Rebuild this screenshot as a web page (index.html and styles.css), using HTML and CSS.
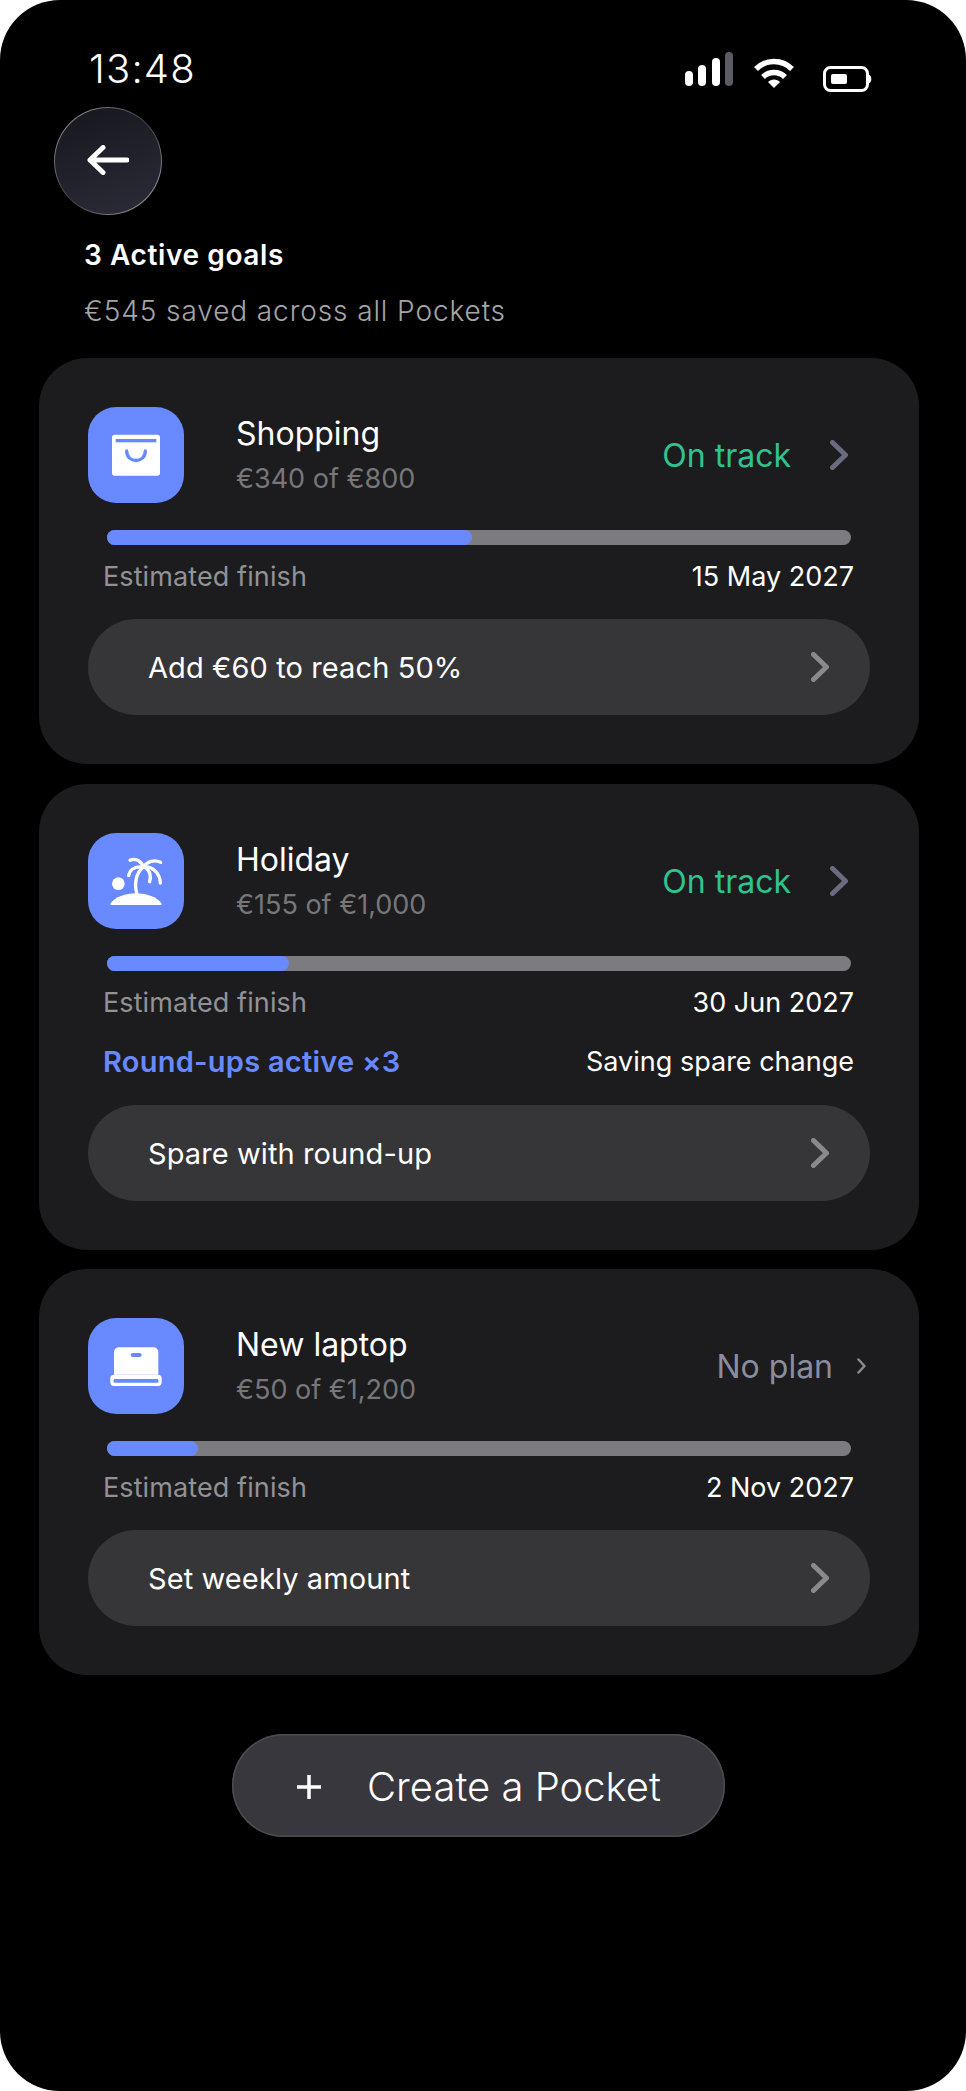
FILE: index.html
```html
<!DOCTYPE html>
<html>
<head>
    <title>Pockets - Active goals</title>
    <link rel="stylesheet" href="styles.css">
</head>
<body>
    <svg class="sprite" width="0" height="0">
        <symbol id="chevron" viewBox="0 0 18 30">
            <path d="M2.5 2.5 L15.5 15 L2.5 27.5" fill="none" stroke="currentColor" stroke-width="5" stroke-linecap="round" stroke-linejoin="round"/>
        </symbol>
    </svg>

    <div class="screen">
        <div class="status-bar">
            <span class="clock">13:48</span>
            <svg class="status-icons" width="187" height="40" viewBox="0 0 187 40">
                <rect x="0" y="19" width="8" height="15" rx="4" fill="#fff"/>
                <rect x="13" y="13" width="8" height="21" rx="4" fill="#fff"/>
                <rect x="27" y="6" width="8" height="28" rx="4" fill="#fff"/>
                <rect x="40" y="0" width="8" height="34" rx="4" fill="#5b5b64"/>
                <path d="M71 17 C81 7 97 7 107 17" fill="none" stroke="#fff" stroke-width="5.5" stroke-linejoin="round"/>
                <path d="M78 25 C84 19 94 19 100 25" fill="none" stroke="#fff" stroke-width="5.5"/>
                <path d="M83 30 C86 26.5 92 26.5 95 30 L89 36 Z" fill="#fff"/>
                <rect x="139.500" y="15.500" width="43" height="23" rx="6" fill="none" stroke="#fff" stroke-width="3"/>
                <rect x="146" y="22" width="16" height="10" rx="2" fill="#fff"/>
                <path d="M184 23 C187 23 187 31 184 31 Z" fill="#fff"/>
            </svg>
        </div>

        <button class="back-button">
            <svg width="42" height="30" viewBox="0 0 42 30">
                <path d="M40 15 H3 M16 2.500 L3 15 L16 27.500" fill="none" stroke="#fff" stroke-width="5" stroke-linecap="round" stroke-linejoin="round"/>
            </svg>
        </button>

        <div class="summary">
            <h1>3 Active goals</h1>
            <p>€545 saved across all Pockets</p>
        </div>

        <div class="card">
            <div class="card-head">
                <div class="card-icon">
                    <svg width="96" height="96" viewBox="0 0 288 288">
                        <rect x="72" y="83" width="144" height="123" rx="8" fill="#fff"/>
                        <rect x="83" y="96" width="122" height="10" fill="#6889ff"/>
                        <path d="M116 132 C116 170 172 170 172 132" fill="none" stroke="#6889ff" stroke-width="10" stroke-linecap="round"/>
                    </svg>
                </div>
                <div class="card-title">
                    <h2>Shopping</h2>
                    <span>€340 of €800</span>
                </div>
                <span class="state state-ok">On track</span>
                <svg class="chevron chevron-head"><use href="#chevron"/></svg>
            </div>
            <div class="progress"><div class="progress-fill" style="width: 49%"></div></div>
            <div class="info-row">
                <span class="info-label">Estimated finish</span>
                <span>15 May 2027</span>
            </div>
            <button class="action">
                <span>Add €60 to reach 50%</span>
                <svg class="chevron"><use href="#chevron"/></svg>
            </button>
        </div>

        <div class="card">
            <div class="card-head">
                <div class="card-icon">
                    <svg width="96" height="96" viewBox="0 0 288 288">
                        <path d="M67 212 C95 170 193 170 221 212 C222 215 220 216 217 216 H71 C68 216 66 215 67 212 Z" fill="#fff"/>
                        <circle cx="91" cy="152" r="19" fill="#fff"/>
                        <g fill="none" stroke="#fff" stroke-width="10" stroke-linecap="round">
                            <path d="M146 180 C138 150 145 120 165 102"/>
                            <path d="M122 128 C126 108 142 100 162 102"/>
                            <path d="M126 82 C142 74 160 84 167 102"/>
                            <path d="M167 102 C176 86 200 78 218 88"/>
                            <path d="M167 102 C190 98 216 118 217 150"/>
                            <path d="M172 104 C186 112 190 130 185 146"/>
                        </g>
                    </svg>
                </div>
                <div class="card-title">
                    <h2>Holiday</h2>
                    <span>€155 of €1,000</span>
                </div>
                <span class="state state-ok">On track</span>
                <svg class="chevron chevron-head"><use href="#chevron"/></svg>
            </div>
            <div class="progress"><div class="progress-fill" style="width: 24.500%"></div></div>
            <div class="info-row">
                <span class="info-label">Estimated finish</span>
                <span>30 Jun 2027</span>
            </div>
            <div class="info-row info-row-extra">
                <span class="roundups">Round-ups active ×3</span>
                <span>Saving spare change</span>
            </div>
            <button class="action action-extra">
                <span>Spare with round-up</span>
                <svg class="chevron"><use href="#chevron"/></svg>
            </button>
        </div>

        <div class="card card-last">
            <div class="card-head">
                <div class="card-icon">
                    <svg width="96" height="96" viewBox="0 0 288 288">
                        <path d="M78 170 V103 C78 94 85 88 93 88 H196 C204 88 211 94 211 103 V170 Z" fill="#fff"/>
                        <rect x="128" y="105" width="33" height="12" rx="6" fill="#6889ff"/>
                        <rect x="67" y="170" width="154" height="34" rx="11" fill="#fff"/>
                        <rect x="77" y="183" width="134" height="11" rx="3" fill="#6889ff"/>
                    </svg>
                </div>
                <div class="card-title">
                    <h2>New laptop</h2>
                    <span>€50 of €1,200</span>
                </div>
                <span class="state state-none">No plan</span>
                <svg class="chevron-small" width="9" height="16" viewBox="0 0 9 16">
                    <path d="M1.500 1.500 L7.500 8 L1.500 14.500" fill="none" stroke="#8a8a8f" stroke-width="2.500" stroke-linecap="round" stroke-linejoin="round"/>
                </svg>
            </div>
            <div class="progress"><div class="progress-fill" style="width: 12.200%"></div></div>
            <div class="info-row">
                <span class="info-label">Estimated finish</span>
                <span>2 Nov 2027</span>
            </div>
            <button class="action">
                <span>Set weekly amount</span>
                <svg class="chevron"><use href="#chevron"/></svg>
            </button>
        </div>

        <div class="create-wrap">
            <button class="create-button">
                <svg width="26" height="26" viewBox="0 0 26 26">
                    <path d="M13 1 V25 M1 13 H25" stroke="#fff" stroke-width="3.500"/>
                </svg>
                <span>Create a Pocket</span>
            </button>
        </div>
    </div>
</body>
</html>
```

FILE: styles.css
```css
body {
    margin: 0;
    background-color: #fff;
    font-family: Inter, "Liberation Sans", sans-serif;
    color: #fff;
}

h1, h2, p {
    margin: 0;
}

button {
    font-family: inherit;
    color: inherit;
    border: none;
    cursor: pointer;
}

.sprite {
    position: absolute;
}

.screen {
    height: 2091px;
    box-sizing: border-box;
    padding: 52px 47px 0 39px;
    background-color: #000;
    border-radius: 60px;
    overflow: hidden;
}

.status-bar {
    display: flex;
    justify-content: space-between;
    align-items: flex-start;
    height: 55px;
    padding: 0 47px 0 50px;
}

.clock {
    font-size: 40px;
    font-weight: 300;
    line-height: 34px;
    letter-spacing: 1.2px;
}

.back-button {
    display: flex;
    align-items: center;
    justify-content: center;
    width: 108px;
    height: 108px;
    margin-left: 15px;
    padding: 0 0 3px;
    border: 1.5px solid transparent;
    border-radius: 50%;
    background: linear-gradient(160deg, #16161e, #2c2c38) padding-box,
        linear-gradient(135deg, #a0a0a6, #3a3a42 50%, #b0b0b8) border-box;
}

.summary {
    margin: 24px 0 0 45px;
}

.summary h1 {
    font-size: 28px;
    font-weight: 600;
    line-height: 32px;
    letter-spacing: 0.6px;
}

.summary p {
    margin-top: 23px;
    font-size: 28px;
    font-weight: 300;
    line-height: 34px;
    letter-spacing: 0.9px;
    color: #a5a5a8;
}

.card {
    width: 880px;
    box-sizing: border-box;
    margin-top: 20px;
    padding: 49px;
    background-color: #1c1c1e;
    border-radius: 48px;
}

.summary + .card {
    margin-top: 30px;
}

.card-head {
    display: flex;
    align-items: center;
    height: 96px;
}

.card-icon {
    width: 96px;
    height: 96px;
    margin-right: 52px;
    background-color: #6889ff;
    border-radius: 28px;
    flex-shrink: 0;
}

.card-title {
    flex: 1;
}

.card-title h2 {
    font-size: 32px;
    font-weight: 400;
    line-height: 36px;
}

.card-title span {
    display: block;
    margin-top: 11px;
    font-size: 27px;
    font-weight: 400;
    line-height: 32px;
    color: #77777a;
}

.state {
    font-size: 32px;
    font-weight: 400;
}

.state-ok {
    color: #2fc48d;
}

.state-none {
    color: #8a8da0;
}

.chevron {
    width: 18px;
    height: 30px;
    color: #8a8a8d;
}

.chevron-head {
    margin: 0 22px 0 39px;
    color: #6a6a80;
}

.chevron-small {
    margin: 0 4px 0 24px;
}

.progress {
    height: 15px;
    margin: 27px 19px 0;
    background-color: #7c7c80;
    border-radius: 8px;
}

.progress-fill {
    height: 100%;
    background-color: #6889ff;
    border-radius: 8px;
}

.info-row {
    display: flex;
    justify-content: space-between;
    margin: 16px 16px 0 15px;
    font-size: 27px;
    line-height: 32px;
}

.info-row-extra {
    margin-top: 27px;
}

.info-label {
    font-weight: 400;
    letter-spacing: 0.1px;
    color: #929296;
}

.roundups {
    font-size: 29px;
    font-weight: 600;
    letter-spacing: 0.25px;
    color: #6889ff;
}

.action {
    display: flex;
    align-items: center;
    justify-content: space-between;
    width: 100%;
    height: 96px;
    margin-top: 26px;
    padding: 0 41px 0 60px;
    background-color: #363639;
    border-radius: 48px;
    font-size: 29px;
    font-weight: 400;
    letter-spacing: 0.1px;
}

.action-extra {
    margin-top: 27px;
}

.card-last {
    margin-top: 19px;
}

.create-wrap {
    margin-top: 59px;
    padding-left: 193px;
}

.create-button {
    display: flex;
    align-items: center;
    gap: 45px;
    width: 493px;
    height: 103px;
    padding: 2px 0 0 64px;
    background-color: #38373e;
    border-radius: 52px;
    box-shadow: inset 0 0 0 1.5px #4c4c50;
    font-size: 40px;
    font-weight: 300;
}
```
